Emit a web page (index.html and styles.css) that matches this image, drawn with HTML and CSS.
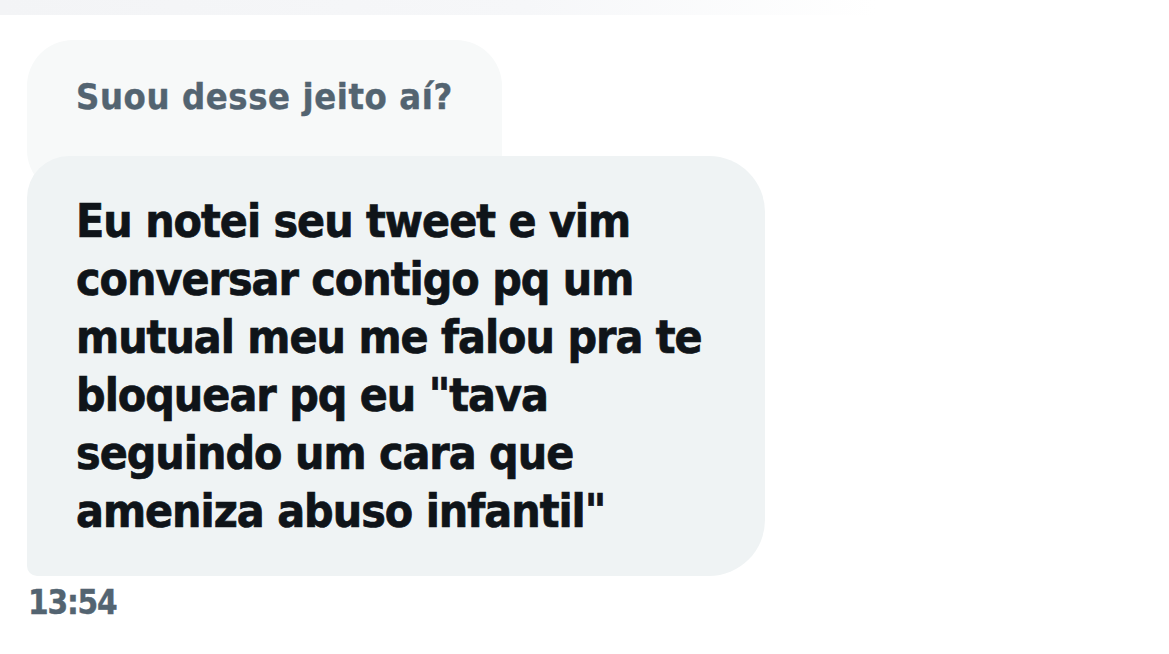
FILE: index.html
```html
<!DOCTYPE html>
<html lang="pt">
<head>
    <meta charset="UTF-8">
    <meta name="viewport" content="width=device-width, initial-scale=1.0">
    <title>Mensagem</title>
    <link rel="stylesheet" href="styles.css">
</head>
<body>
    <div class="top-bar"></div>

    <div class="conversa">
        <div class="citacao">Suou desse jeito aí?</div>

        <div class="mensagem">
            Eu notei seu tweet e vim<br>
            conversar contigo pq um<br>
            mutual meu me falou pra te<br>
            bloquear pq eu "tava<br>
            seguindo um cara que<br>
            ameniza abuso infantil"
        </div>

        <div class="hora">13:54</div>
    </div>
</body>
</html>
```

FILE: styles.css
```css
* {
    margin: 0;
    padding: 0;
    box-sizing: border-box;
}

body {
    background: #ffffff;
    font-family: "DejaVu Sans Condensed", "Liberation Sans Narrow", "Liberation Sans", sans-serif;
    font-weight: bold;
}

.top-bar {
    height: 15px;
    width: 100%;
    background: linear-gradient(90deg, #f3f4f6 0%, #f6f7f9 45%, #ffffff 75%);
}

.conversa {
    padding: 25px 0 0 27px;
    display: flex;
    flex-direction: column;
    align-items: flex-start;
}

.citacao {
    width: 475px;
    height: 156px;
    margin-bottom: -40px;
    padding: 36px 0 0 49px;
    background: #f7f9f9;
    border-radius: 46px 46px 0 46px;
    color: #536471;
    font-size: 36px;
    letter-spacing: 0.6px;
    -webkit-text-stroke: 0.4px #536471;
}

.mensagem {
    width: 738px;
    padding: 36px 0 36px 49px;
    background: #eff3f4;
    border-radius: 42px 56px 56px 10px;
    color: #0f1419;
    font-size: 46px;
    line-height: 58px;
    letter-spacing: -1px;
    -webkit-text-stroke: 0.7px #0f1419;
}

.hora {
    margin-top: 10px;
    margin-left: 1px;
    color: #536471;
    font-size: 33px;
    line-height: 33px;
    letter-spacing: -1.2px;
    -webkit-text-stroke: 0.4px #536471;
}
```
